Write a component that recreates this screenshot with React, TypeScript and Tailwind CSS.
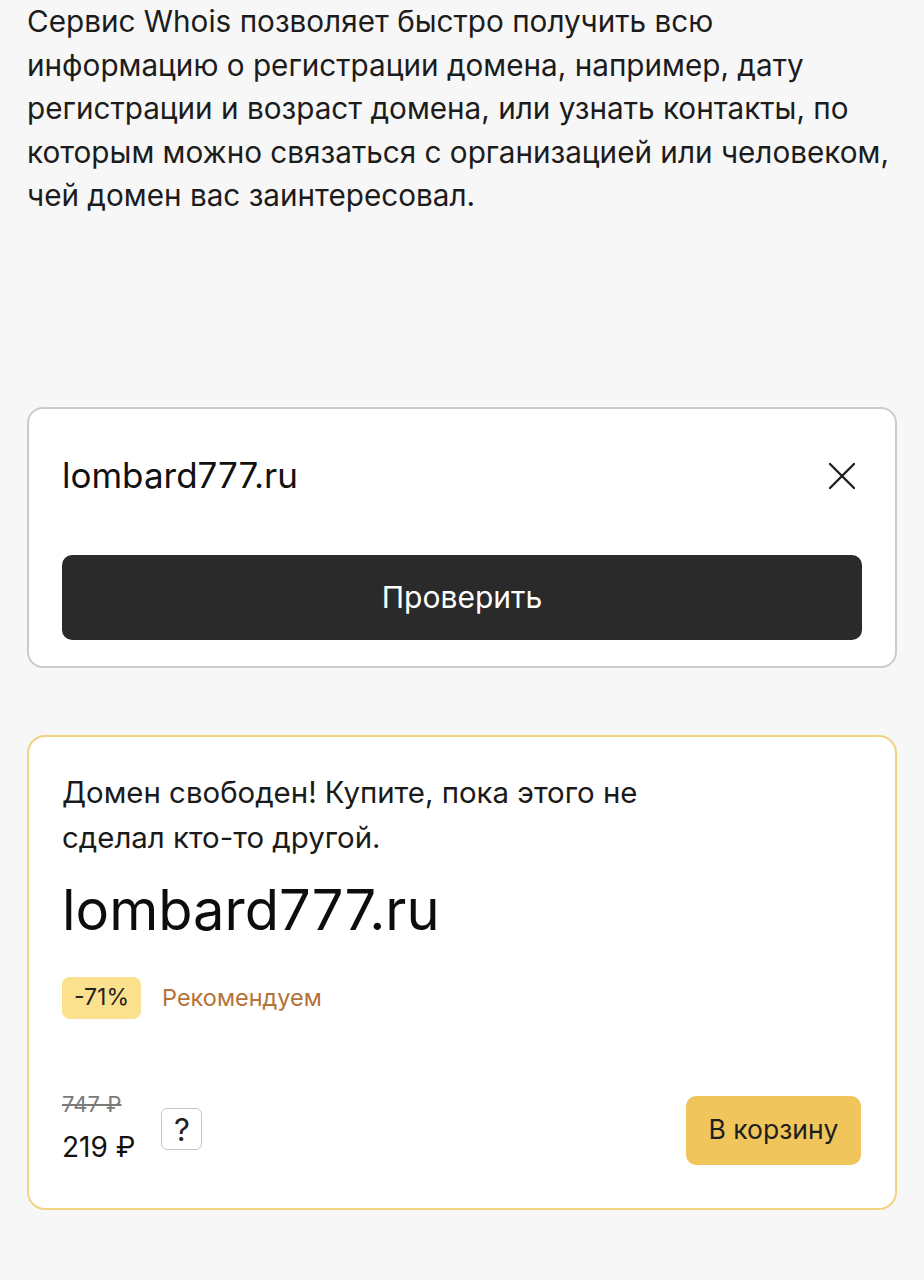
import React, { useState } from "react";

const font = { fontFamily: 'Inter, "Liberation Sans", Arial, sans-serif' };

function CloseIcon() {
    return (
        <svg width="28" height="28" viewBox="0 0 28 28" fill="none">
            <path
                d="M2 2 L26 26 M26 2 L2 26"
                stroke="#1f1f1f"
                strokeWidth="2.4"
                strokeLinecap="round"
            />
        </svg>
    );
}

function SearchCard({ domain }: { domain: string }) {
    return (
        <div className="rounded-[16px] border-2 border-[#c9cbcd] bg-white px-[33px] pt-[32px] pb-[26px]">
            <div className="flex h-[70px] items-center justify-between">
                <span className="text-[35px] text-[#111]">{domain}</span>
                <button className="mr-[6px] flex items-center justify-center">
                    <CloseIcon />
                </button>
            </div>
            <button className="mt-[44px] flex h-[85px] w-full items-center justify-center rounded-[10px] bg-[#2a2a2a] text-[30px] text-white">
                Проверить
            </button>
        </div>
    );
}

function ResultCard({ domain }: { domain: string }) {
    return (
        <div className="mt-[67px] rounded-[18px] border-2 border-[#f0d483] bg-white pl-[33px] pr-[34px] pt-[33px] pb-[43px]">
            <p className="text-[29.4px] leading-[45px] text-[#1a1a1a]">
                Домен свободен! Купите, пока этого не
                <br />
                сделал кто-то другой.
            </p>
            <div className="mt-[15px] text-[56px] leading-[70px] text-[#0d0d0d]">
                {domain}
            </div>
            <div className="mt-[32px] flex items-center">
                <span className="flex h-[42px] items-center rounded-[8px] bg-[#fbe08d] px-[12px] text-[23px] text-[#222]">
                    -71%
                </span>
                <span className="ml-[21px] text-[23.5px] text-[#b57238]">Рекомендуем</span>
            </div>
            <div className="mt-[71px] flex items-end justify-between">
                <div className="flex items-center">
                    <div className="flex flex-col">
                        <span className="text-[22px] leading-[28px] text-[#7a7a7a] line-through">
                            747 ₽
                        </span>
                        <span className="mt-[11px] text-[28px] leading-[36px] text-[#111]">
                            219 ₽
                        </span>
                    </div>
                    <span className="mt-[4px] ml-[26px] flex h-[42px] w-[41px] items-center justify-center rounded-[6px] border-[1.5px] border-[#c4c6c8] text-[31px] leading-none text-[#222]">
                        ?
                    </span>
                </div>
                <button className="flex h-[69px] w-[175px] items-center justify-center rounded-[10px] bg-[#efc55c] text-[26.5px] text-[#1e1e1e]">
                    В корзину
                </button>
            </div>
        </div>
    );
}

export default function App() {
    const [domain] = useState("lombard777.ru");
    return (
        <div className="min-h-[1280px] bg-[#f7f7f7] px-[27px]" style={font}>
            <p className="text-[29.7px] leading-[43.5px] text-[#1c1c1c]">
                Сервис Whois позволяет быстро получить всю
                <br />
                информацию о регистрации домена, например, дату
                <br />
                регистрации и возраст домена, или узнать контакты, по
                <br />
                которым можно связаться с организацией или человеком,
                <br />
                чей домен вас заинтересовал.
            </p>
            <div className="pt-[189px]">
                <SearchCard domain={domain} />
                <ResultCard domain={domain} />
            </div>
        </div>
    );
}
